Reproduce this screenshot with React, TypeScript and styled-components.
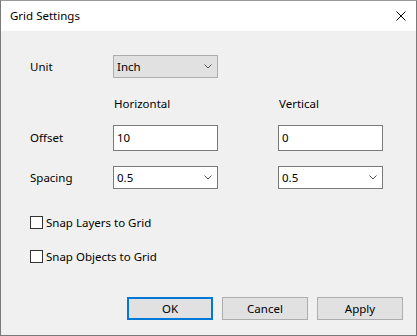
import React from "react";
import styled, { createGlobalStyle } from "styled-components";

const Global = createGlobalStyle`
  html, body { margin: 0; padding: 0; background: #ffffff; }
  * { box-sizing: border-box; }
  body { font-family: "Noto Sans", "Liberation Sans", sans-serif; font-size: 11.5px; color: #000; }
`;

const Window = styled.div`
  width: 417px;
  height: 336px;
  border: 1px solid #7a7a7a;
  border-top-color: #9a9a9a;
  background: #f0f0f0;
  display: flex;
  flex-direction: column;
`;

const TitleBar = styled.div`
  height: 30px;
  background: #ffffff;
  display: flex;
  align-items: center;
  justify-content: space-between;
  padding: 0 9px 0 9px;
  flex-shrink: 0;
`;

const Title = styled.span`
  line-height: 16px;
  color: #000;
`;

const CloseIcon = () => (
  <svg width="10" height="10" viewBox="0 0 10 10" style={{ display: "block" }}>
    <path d="M0.5 0.5 L9.5 9.5 M9.5 0.5 L0.5 9.5" stroke="#000" strokeWidth="1" fill="none" />
  </svg>
);

const CloseBox = styled.div`
  width: 10px;
  height: 10px;
  margin-right: 1px;
`;

const Body = styled.div`
  flex: 1;
  display: flex;
  flex-direction: column;
  padding: 24px 13px 15px 29px;
`;

const Row = styled.div<{ $top: number; $h: number }>`
  display: grid;
  grid-template-columns: 83px 105px 60px 105px;
  align-items: center;
  height: ${(p) => p.$h}px;
  margin-top: ${(p) => p.$top}px;
`;

const Label = styled.span`
  line-height: 16px;
  white-space: nowrap;
`;

const HeaderLabel = styled.span<{ $col: number }>`
  grid-column: ${(p) => p.$col};
  padding-left: 1px;
  line-height: 16px;
`;

const Field = styled.div<{ $col: number; $h: number; $variant: "button" | "edit" }>`
  grid-column: ${(p) => p.$col};
  height: ${(p) => p.$h}px;
  border: 1px solid ${(p) => (p.$variant === "button" ? "#adadad" : "#7a7a7a")};
  background: ${(p) => (p.$variant === "button" ? "#e1e1e1" : "#ffffff")};
  display: flex;
  align-items: center;
  justify-content: space-between;
  padding: 0 5px 0 3px;
  line-height: 16px;
`;

const Chevron = () => (
  <svg width="8" height="5" viewBox="0 0 8 5" style={{ display: "block" }}>
    <path d="M0.5 0.5 L4 4 L7.5 0.5" stroke="#555" strokeWidth="1" fill="none" />
  </svg>
);

const CheckRow = styled.label<{ $top: number }>`
  display: flex;
  align-items: center;
  gap: 3px;
  margin-top: ${(p) => p.$top}px;
  height: 16px;
`;

const Box = styled.span`
  width: 13px;
  height: 13px;
  border: 1px solid #333333;
  background: #ffffff;
  flex-shrink: 0;
`;

const Footer = styled.div`
  margin-top: auto;
  display: flex;
  justify-content: flex-end;
  gap: 9px;
`;

const Button = styled.button<{ $default?: boolean }>`
  width: 86px;
  height: 23px;
  font-family: inherit;
  font-size: inherit;
  color: #000;
  background: #e1e1e1;
  border: ${(p) => (p.$default ? "2px solid #0078d7" : "1px solid #adadad")};
  padding: 0;
  line-height: 16px;
`;

export default function App() {
  return (
    <>
      <Global />
      <Window>
        <TitleBar>
          <Title>Grid Settings</Title>
          <CloseBox>
            <CloseIcon />
          </CloseBox>
        </TitleBar>
        <Body>
          <Row $top={0} $h={23}>
            <Label>Unit</Label>
            <Field $col={2} $h={23} $variant="button">
              <span>Inch</span>
              <Chevron />
            </Field>
          </Row>
          <Row $top={18} $h={16}>
            <HeaderLabel $col={2}>Horizontal</HeaderLabel>
            <HeaderLabel $col={4}>Vertical</HeaderLabel>
          </Row>
          <Row $top={13} $h={26}>
            <Label>Offset</Label>
            <Field $col={2} $h={26} $variant="edit">
              <span>10</span>
            </Field>
            <Field $col={4} $h={26} $variant="edit">
              <span>0</span>
            </Field>
          </Row>
          <Row $top={15} $h={23}>
            <Label>Spacing</Label>
            <Field $col={2} $h={23} $variant="edit">
              <span>0.5</span>
              <Chevron />
            </Field>
            <Field $col={4} $h={23} $variant="edit">
              <span>0.5</span>
              <Chevron />
            </Field>
          </Row>
          <CheckRow $top={25}>
            <Box />
            <span>Snap Layers to Grid</span>
          </CheckRow>
          <CheckRow $top={18}>
            <Box />
            <span>Snap Objects to Grid</span>
          </CheckRow>
          <Footer>
            <Button $default>OK</Button>
            <Button>Cancel</Button>
            <Button>Apply</Button>
          </Footer>
        </Body>
      </Window>
    </>
  );
}
